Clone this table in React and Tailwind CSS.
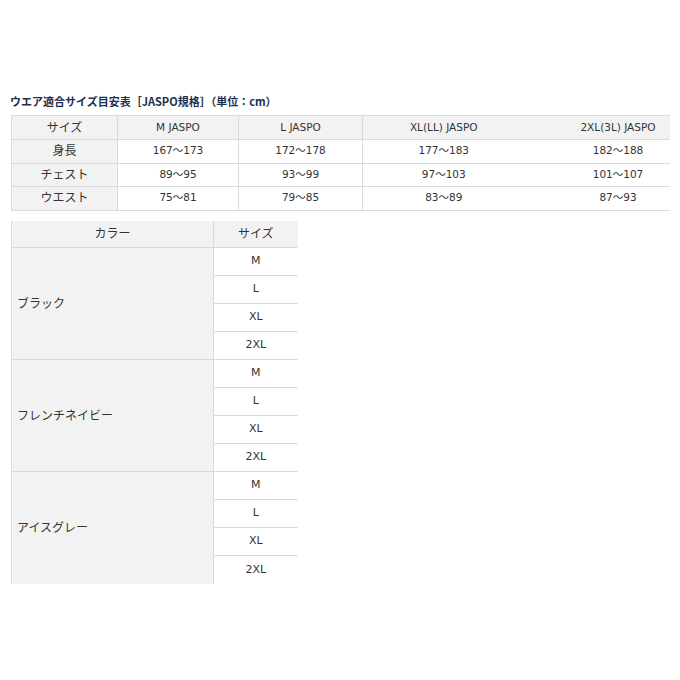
import React from "react";

const jp = { fontFamily: '"DejaVu Sans", "Noto Sans CJK JP", sans-serif' };

const sizeRows = [
  ["身長", "167～173", "172～178", "177～183", "182～188"],
  ["チェスト", "89～95", "93～99", "97～103", "101～107"],
  ["ウエスト", "75～81", "79～85", "83～89", "87～93"],
];

const colors = ["ブラック", "フレンチネイビー", "アイスグレー"];
const sizes = ["M", "L", "XL", "2XL"];

export default function App() {
  return (
    <div className="w-[680px] h-[680px] bg-white text-[#333]" style={jp}>
      <div className="pt-[94px] pl-[10px]">
        <div className="text-[11px] font-bold text-[#1c2f4f] leading-[14px] h-[21px]" style={{ fontFamily: '"Noto Sans CJK JP", sans-serif' }}>
          ウエア適合サイズ目安表［JASPO規格］（単位：cm）
        </div>
        <div className="ml-[1px] w-[659px] overflow-hidden">
          <table className="border-collapse w-[700px] table-fixed">
            <colgroup>
              <col className="w-[106px]" />
              <col className="w-[121px]" />
              <col className="w-[124px]" />
              <col className="w-[162px]" />
              <col className="w-[187px]" />
            </colgroup>
            <tbody>
              <tr className="h-[24px] bg-[#f2f2f2]">
                <td className="border border-[#dadada] text-center text-[12px] p-0">サイズ</td>
                <td className="border border-[#dadada] text-center text-[10.5px] p-0">M JASPO</td>
                <td className="border border-[#dadada] text-center text-[10.5px] p-0">L JASPO</td>
                <td className="border-y border-l border-[#dadada] text-center text-[10.5px] p-0">XL(LL) JASPO</td>
                <td className="border-y border-[#dadada] text-center text-[10.5px] p-0">2XL(3L) JASPO</td>
              </tr>
              {sizeRows.map((r) => (
                <tr key={r[0]} className="h-[23.5px]">
                  <td className="border border-[#dadada] bg-[#f2f2f2] text-center text-[12px] p-0">{r[0]}</td>
                  <td className="border border-[#dadada] text-center text-[10.5px] p-0">{r[1]}</td>
                  <td className="border border-[#dadada] text-center text-[10.5px] p-0">{r[2]}</td>
                  <td className="border-y border-l border-[#dadada] text-center text-[10.5px] p-0">{r[3]}</td>
                  <td className="border-y border-[#dadada] text-center text-[10.5px] p-0">{r[4]}</td>
                </tr>
              ))}
            </tbody>
          </table>
        </div>
        <div className="ml-[1px] mt-[10px]">
          <table className="border-collapse w-[286px] table-fixed">
            <colgroup>
              <col className="w-[202px]" />
              <col className="w-[84px]" />
            </colgroup>
            <tbody>
              <tr className="h-[27px] bg-[#f2f2f2]">
                <td className="border-l border-b border-[#dadada] text-center text-[12px] p-0">カラー</td>
                <td className="border-l border-b border-[#dadada] text-center text-[12px] p-0">サイズ</td>
              </tr>
              {colors.map((c, ci) =>
                sizes.map((s, si) => (
                  <tr key={c + s} className="h-[28px]">
                    {si === 0 && (
                      <td
                        rowSpan={4}
                        className={`border-l border-[#dadada] bg-[#f2f2f2] text-left text-[12px] pl-[5px] p-0 ${ci < 2 ? "border-b" : ""}`}
                      >
                        {c}
                      </td>
                    )}
                    <td className={`border-l border-[#dadada] text-center text-[11px] p-0 ${ci === 2 && si === 3 ? "" : "border-b"}`}>
                      {s}
                    </td>
                  </tr>
                ))
              )}
            </tbody>
          </table>
        </div>
      </div>
    </div>
  );
}
